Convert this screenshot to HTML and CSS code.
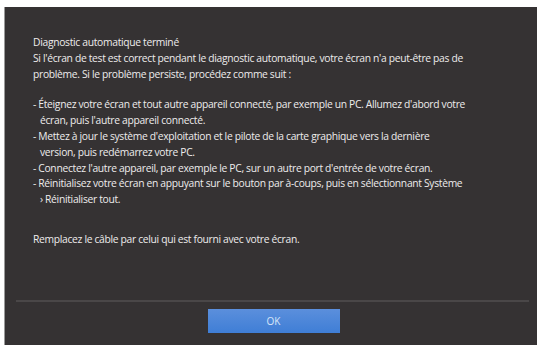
FILE: index.html
```html
<!DOCTYPE html>
<html lang="fr">
<head>
<meta charset="utf-8">
<link rel="stylesheet" href="styles.css">
</head>
<body>
<div class="dialog">
  <div class="content">
    <p class="para">Diagnostic automatique terminé<br>Si l'écran de test est correct pendant le diagnostic automatique, votre écran n'a peut-être pas de<br>problème. Si le problème persiste, procédez comme suit :</p>
    <ul class="steps">
      <li>- Éteignez votre écran et tout autre appareil connecté, par exemple un PC. Allumez d'abord votre<br>écran, puis l'autre appareil connecté.</li>
      <li>- Mettez à jour le système d'exploitation et le pilote de la carte graphique vers la dernière<br>version, puis redémarrez votre PC.</li>
      <li>- Connectez l'autre appareil, par exemple le PC, sur un autre port d'entrée de votre écran.</li>
      <li>- Réinitialisez votre écran en appuyant sur le bouton par à-coups, puis en sélectionnant Système<br>› Réinitialiser tout.</li>
    </ul>
    <p class="para">Remplacez le câble par celui qui est fourni avec votre écran.</p>
  </div>
  <div class="footer">
    <button class="ok">OK</button>
  </div>
</div>
</body>
</html>
```
FILE: styles.css
```css
html, body {
  margin: 0;
  padding: 0;
  background: #ffffff;
}
body {
  width: 539px;
  height: 345px;
  overflow: hidden;
  font-family: "Open Sans", "Liberation Sans", sans-serif;
}
.dialog {
  margin: 7px 2px 0 4px;
  height: 338px;
  background: #353233;
  border-left: 1px solid #9a9a9a;
  display: flex;
  flex-direction: column;
  box-sizing: border-box;
}
.content {
  flex: 1;
  padding: 28px 0 0 28px;
  color: #eeecec;
  font-size: 10.3px;
  line-height: 15.8px;
  letter-spacing: -0.3px;
  word-spacing: -0.1px;
  white-space: nowrap;
}
.para {
  margin: 0 0 15px 0;
}
.steps {
  list-style: none;
  margin: 0 0 24px 0;
  padding: 0;
}
.steps li {
  padding-left: 7px;
  text-indent: -7px;
}
.footer {
  margin: 0 8px 0 11px;
  border-top: 2px solid #4a4748;
  height: 45px;
  display: flex;
  justify-content: center;
  padding-top: 7px;
  box-sizing: border-box;
}
.ok {
  width: 132px;
  height: 24px;
  border: none;
  background: linear-gradient(#5b8fdc, #3f7ed6);
  color: #d8e6f8;
  font-family: "Open Sans", "Liberation Sans", sans-serif;
  font-size: 10px;
  padding: 0;
  margin-left: 2px;
}
```
